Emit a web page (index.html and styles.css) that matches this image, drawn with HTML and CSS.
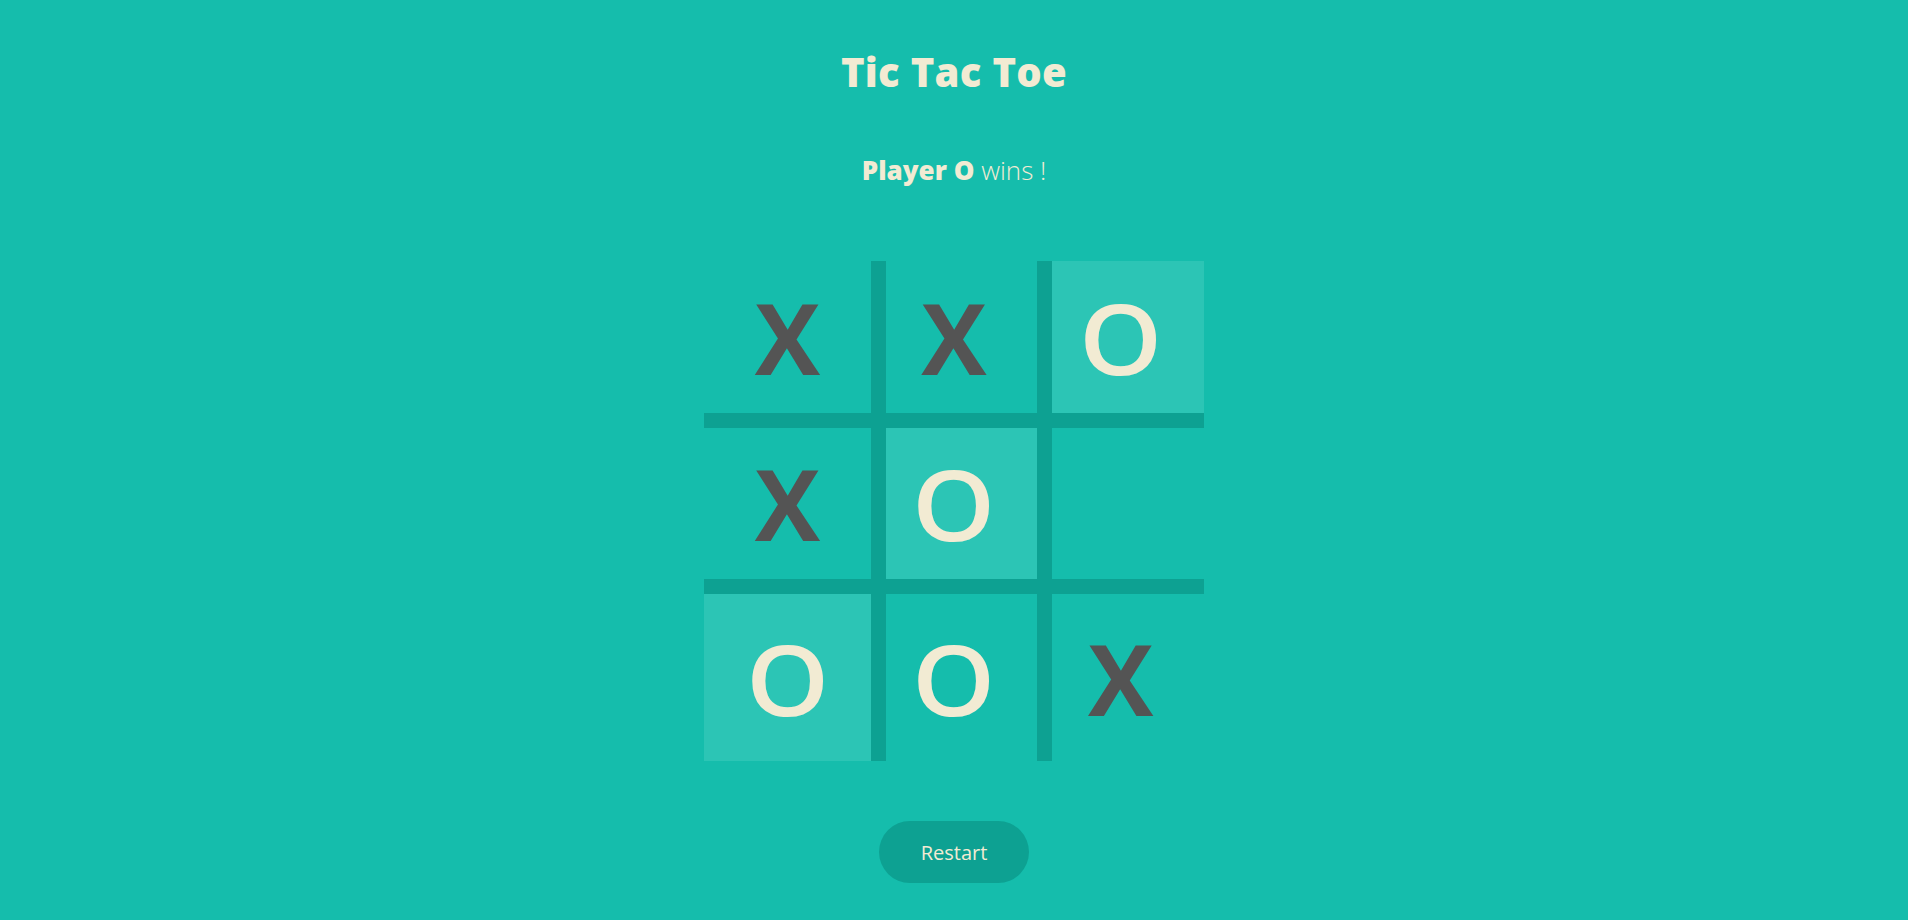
FILE: index.html
```html
<!DOCTYPE html>
<html>
<head>
<meta charset="utf-8">
<title>Tic Tac Toe</title>
<link rel="stylesheet" href="styles.css">
</head>
<body>
<main class="game">
  <h1 class="title">Tic Tac Toe</h1>
  <p class="status"><strong>Player O</strong> wins !</p>
  <div class="board">
    <div class="cell x"><span class="mark">X</span></div>
    <div class="cell x col"><span class="mark">X</span></div>
    <div class="cell o col win"><span class="mark">O</span></div>
    <div class="cell x"><span class="mark">X</span></div>
    <div class="cell o col win"><span class="mark">O</span></div>
    <div class="cell col"></div>
    <div class="cell o last win"><span class="mark">O</span></div>
    <div class="cell o col last"><span class="mark">O</span></div>
    <div class="cell x col last"><span class="mark">X</span></div>
  </div>
  <button class="restart">Restart</button>
</main>
</body>
</html>
```
FILE: styles.css
```css
html, body {
  margin: 0;
  padding: 0;
  background: #15bdac;
  height: 100%;
}
body {
  font-family: "Open Sans", "Liberation Sans", sans-serif;
  color: #f2ebd3;
}
.game {
  display: flex;
  flex-direction: column;
  align-items: center;
  padding-top: 48px;
}
.title {
  margin: 0;
  font-size: 40px;
  line-height: 48px;
  font-weight: 800;
  letter-spacing: 0.3px;
}
.status {
  margin: 58px 0 0;
  font-size: 26px;
  line-height: 32px;
  font-weight: 300;
}
.status strong {
  font-weight: 800;
}
.board {
  margin-top: 75px;
  width: 500px;
  height: 500px;
  display: grid;
  grid-template-columns: repeat(3, 1fr);
  grid-template-rows: repeat(3, 1fr);
}
.cell {
  box-sizing: border-box;
  display: flex;
  align-items: center;
  justify-content: center;
  font-size: 98px;
  font-weight: 700;
  line-height: 1;
  border-bottom: 15px solid #0da192;
}
.cell.col {
  border-left: 15px solid #0da192;
  padding-right: 15px;
}
.cell.last {
  border-bottom: none;
}
.cell.x {
  color: #545454;
}
.cell.o {
  color: #f2ebd3;
  font-weight: 600;
}
.cell.o .mark {
  display: inline-block;
  transform: scaleX(1.08);
}
.cell.win {
  background: #2cc5b5;
}
.restart {
  margin-top: 60px;
  width: 150px;
  height: 62px;
  border: none;
  border-radius: 31px;
  background: #0da192;
  color: #f2ebd3;
  font-family: "Open Sans", "Liberation Sans", sans-serif;
  font-size: 20px;
  font-weight: 400;
  cursor: pointer;
}
```
